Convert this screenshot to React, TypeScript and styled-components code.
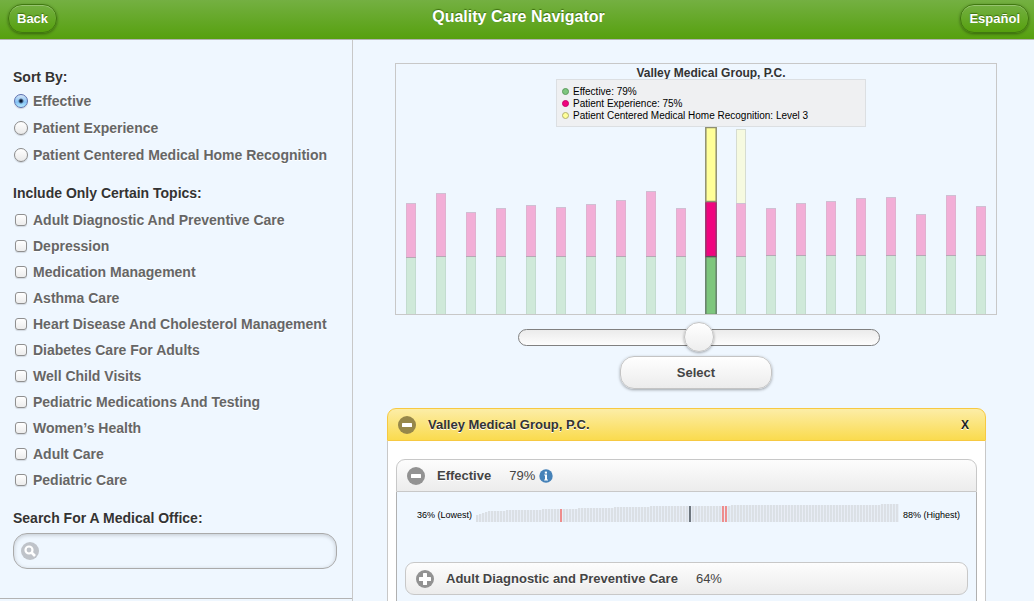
import React, { useState } from "react";
import styled, { createGlobalStyle, css } from "styled-components";

const GlobalStyle = createGlobalStyle`
  *, *::before, *::after { box-sizing: border-box; }
  html, body { margin: 0; background: #eff7ff; }
  body, button, input { font-family: "Liberation Sans", Arial, Helvetica, sans-serif; }
`;

const Shell = styled.div`
  display: flex;
  flex-direction: column;
  height: 100vh;
  overflow: hidden;
  color: #333;
`;

const TopBar = styled.header`
  display: grid;
  grid-template-columns: 1fr auto 1fr;
  align-items: start;
  flex: none;
  height: 40px;
  padding: 4px 5px 0 8px;
  border-bottom: 1px solid #b3b3b3;
  background: linear-gradient(#74b042, #56a00e);
`;

const AppTitle = styled.h1`
  margin: 0;
  color: #fff;
  font-size: 16px;
  line-height: 25px;
  text-shadow: 0 -1px 1px #3d6f0f;
`;

const BarButton = styled.button<{ $end?: boolean }>`
  justify-self: ${(p) => (p.$end ? "end" : "start")};
  height: 29px;
  padding: 0 8px;
  border: 1px solid #40780f;
  border-radius: 14px;
  background: linear-gradient(#74b042, #56a00e);
  box-shadow: 0 1px 3px rgba(0, 0, 0, 0.4), inset 0 1px 0 rgba(255, 255, 255, 0.25);
  color: #fff;
  font-size: 13px;
  font-weight: bold;
  text-shadow: 0 -1px 1px #3d6f0f;
`;

const Columns = styled.div`
  display: flex;
  flex: 1;
  min-height: 0;
`;

const Sidebar = styled.aside`
  flex: none;
  width: 353px;
  overflow-y: auto;
  scrollbar-width: none;
  border-right: 1px solid #c8c8c8;
`;

const Filters = styled.form`
  display: flex;
  flex-direction: column;
  gap: 16px;
  padding: 28px 15px 29px 13px;
  border-bottom: 1px solid #b3b3b3;
`;

const Group = styled.fieldset`
  margin: 0;
  padding: 0;
  border: 0;
`;

const headingText = css`
  display: block;
  padding: 0;
  color: #333;
  font-size: 14px;
  font-weight: bold;
  line-height: 19px;
  text-shadow: 0 1px 0 #fff;
`;

const GroupTitle = styled.legend`
  ${headingText}
`;

const SearchTitle = styled.label`
  ${headingText}
`;

const Options = styled.div<{ $spaced?: boolean }>`
  padding-top: ${(p) => (p.$spaced ? 4 : 0)}px;
`;

const Option = styled.label<{ $height: number }>`
  display: flex;
  align-items: center;
  gap: 5px;
  height: ${(p) => p.$height}px;
  color: #666;
  font-size: 14px;
  font-weight: bold;
  text-shadow: 0 1px 0 #fff;
  white-space: nowrap;
`;

const Radio = styled.input.attrs({ type: "radio" })`
  appearance: none;
  width: 14px;
  height: 14px;
  margin: 0 0 0 1px;
  border: 1px solid #8b8b8b;
  border-radius: 50%;
  background: linear-gradient(#fff, #e9e9e9);
  box-shadow: 0 1px 1px rgba(0, 0, 0, 0.15);
  &:checked {
    border-color: #5b6fae;
    background: radial-gradient(circle, #0c1a33 0 1px, transparent 3px), linear-gradient(#d3e4f7, #84c2f5 60%, #b6ecff);
  }
`;

const Checkbox = styled.input.attrs({ type: "checkbox" })`
  appearance: none;
  width: 12px;
  height: 12px;
  margin: 0 1px 0 2px;
  border: 1px solid #909090;
  border-radius: 3px;
  background: linear-gradient(#fff, #ececec);
  box-shadow: 0 1px 1px rgba(0, 0, 0, 0.12);
  &:checked { background: #6fb6f2; }
`;

const SearchSection = styled.div`
  display: flex;
  flex-direction: column;
  gap: 5px;
`;

const SearchBox = styled.div`
  display: flex;
  align-items: center;
  gap: 8px;
  height: 36px;
  padding: 0 8px 0 7px;
  border: 1px solid #aaa;
  border-radius: 14px;
  box-shadow: inset 0 1px 4px rgba(0, 0, 0, 0.2);
`;

const SearchInput = styled.input`
  flex: 1;
  min-width: 0;
  border: 0;
  outline: 0;
  background: transparent;
  font-size: 14px;
`;

const Content = styled.main`
  flex: 1;
  min-width: 0;
  padding: 23px 48px 0 34px;
  overflow-y: auto;
  scrollbar-width: none;
`;

const Explorer = styled.section`
  display: flex;
  flex-direction: column;
  align-items: center;
  margin: 0 -11px 0 8px;
`;

const Chart = styled.figure`
  align-self: stretch;
  margin: 0;
  border: 1px solid #c8c8c8;
`;

const ChartHead = styled.figcaption`
  display: flex;
  flex-direction: column;
  align-items: center;
  padding-left: 30px;
`;

const ChartTitle = styled.h2`
  height: 15px;
  margin: 0;
  padding-top: 2px;
  font-size: 12px;
  line-height: 15px;
`;

const Legend = styled.ul`
  width: 310px;
  height: 48px;
  margin: 0;
  padding: 5px;
  border: 1px solid #dcdfe2;
  background: #eff0f2;
  list-style: none;
`;

const LegendItem = styled.li`
  display: flex;
  align-items: center;
  gap: 4px;
  height: 12px;
  color: #000;
  font-size: 10px;
  white-space: nowrap;
`;

const Dot = styled.span<{ $color: string; $edge: string }>`
  width: 7px;
  height: 7px;
  border: 1px solid ${(p) => p.$edge};
  border-radius: 50%;
  background: ${(p) => p.$color};
`;

const Plot = styled.svg`
  display: block;
  width: 100%;
  height: 187px;
`;

const SliderRow = styled.div`
  display: flex;
  justify-content: center;
  align-self: stretch;
  padding: 7px 0 0 6px;
`;

const Slider = styled.input.attrs({ type: "range" })`
  appearance: none;
  width: 362px;
  height: 31px;
  margin: 0;
  background: transparent;
  &::-webkit-slider-runnable-track {
    height: 17px;
    border: 1px solid #808080;
    border-radius: 9px;
    background: linear-gradient(#ebebeb, #fdfdfd);
  }
  &::-webkit-slider-thumb {
    appearance: none;
    width: 30px;
    height: 30px;
    margin-top: -8px;
    border: 1px solid #c4c4c4;
    border-radius: 50%;
    background: linear-gradient(#fff, #eee);
    box-shadow: 0 1px 3px rgba(0, 0, 0, 0.35);
  }
`;

const SelectButton = styled.button`
  width: 152px;
  height: 33px;
  margin-top: 3px;
  border: 1px solid #c4c4c4;
  border-radius: 14px;
  background: linear-gradient(#fff, #ececec);
  box-shadow: 0 1px 3px rgba(0, 0, 0, 0.35);
  color: #444;
  font-size: 13px;
  font-weight: bold;
`;

const Panel = styled.section`
  margin-top: 19px;
`;

const PanelHead = styled.header`
  display: flex;
  align-items: center;
  gap: 12px;
  height: 33px;
  padding: 0 16px 0 10px;
  border: 1px solid #f7c942;
  border-radius: 9px 9px 0 0;
  background: linear-gradient(#fceda7, #fadb4e);
`;

const PanelTitle = styled.h2`
  flex: 1;
  margin: 0;
  font-size: 13px;
  text-shadow: 0 1px 0 #fff;
`;

const PlainButton = styled.button`
  display: flex;
  padding: 0;
  border: 0;
  background: none;
  color: #222;
  font-size: 12px;
  font-weight: bold;
  text-shadow: 0 1px 0 #fff;
`;

const PanelBody = styled.div`
  padding: 18px 8px;
  border: 1px solid #c8c8c8;
  border-top: 0;
  background: #fff;
`;

const MeasureHead = styled.header<{ $closed?: boolean }>`
  display: flex;
  align-items: center;
  gap: 12px;
  height: 33px;
  padding: 0 10px;
  border: 1px solid #c8c8c8;
  border-radius: ${(p) => (p.$closed ? "9px" : "9px 9px 0 0")};
  background: linear-gradient(#fdfdfd, #ececec);
  color: #444;
  font-size: 13px;
`;

const MeasureTitle = styled.h3`
  margin: 0;
  font-size: 13px;
  text-shadow: 0 1px 0 #fff;
`;

const Score = styled.span`
  display: flex;
  align-items: center;
  gap: 4px;
  margin-left: 6px;
`;

const MeasureBody = styled.div`
  padding: 12px 8px 24px;
  border: 1px solid #b0b0b0;
  border-top: 0;
  background: #eff7ff;
`;

const Distribution = styled.div`
  display: flex;
  align-items: center;
  gap: 4px;
  height: 21px;
  margin: 0 8px 37px 12px;
  color: #000;
  font-size: 9px;
  white-space: nowrap;
`;

const Strip = styled.svg`
  flex: 1;
  align-self: flex-start;
  min-width: 0;
  height: 18px;
`;

const Glyph = ({ kind, color }: { kind: "plus" | "minus"; color: string }) => (
  <svg width="18" height="18" viewBox="0 0 18 18" aria-hidden="true">
    <circle cx="9" cy="9" r="9" fill={color} />
    <rect x="4" y="7" width="10" height="4" rx="0.5" fill="#fff" />
    {kind === "plus" && <rect x="7" y="4" width="4" height="10" rx="0.5" fill="#fff" />}
    {kind === "plus" && <rect x="3" y="7" width="12" height="4" rx="0.5" fill="#fff" />}
    {kind === "plus" && <rect x="7" y="3" width="4" height="12" rx="0.5" fill="#fff" />}
  </svg>
);

const SearchGlyph = () => (
  <svg width="18" height="18" viewBox="0 0 18 18" aria-hidden="true">
    <circle cx="9" cy="9" r="9" fill="#bfc3c9" />
    <circle cx="8" cy="8" r="3.5" fill="none" stroke="#fff" strokeWidth="2.2" />
    <path d="M10.5 10.5 L14 14" stroke="#fff" strokeWidth="2.6" />
  </svg>
);

const InfoGlyph = () => (
  <svg width="14" height="14" viewBox="0 0 14 14" aria-hidden="true">
    <circle cx="7" cy="7" r="6.7" fill="#4682b8" />
    <rect x="5.8" y="2.6" width="2.2" height="2" fill="#fff" />
    <path d="M5.2 5.6 H8 V10.6 H9 V11.4 H5.2 V10.6 H6 V6.4 H5.2 Z" fill="#fff" />
  </svg>
);

const sorts = ["Effective", "Patient Experience", "Patient Centered Medical Home Recognition"];

const topics = [
  "Adult Diagnostic And Preventive Care",
  "Depression",
  "Medication Management",
  "Asthma Care",
  "Heart Disease And Cholesterol Management",
  "Diabetes Care For Adults",
  "Well Child Visits",
  "Pediatric Medications And Testing",
  "Women’s Health",
  "Adult Care",
  "Pediatric Care",
];

const legend = [
  { text: "Effective: 79%", color: "#7dc67d", edge: "#5c9a5c" },
  { text: "Patient Experience: 75%", color: "#f0047f", edge: "#c9036b" },
  { text: "Patient Centered Medical Home Recognition: Level 3", color: "#ffff99", edge: "#b0b070" },
];

type Office = { effective: number; experience: number; home?: number };

const experience = [54, 63, 44, 48, 51, 49, 52, 56, 65, 48, 55, 53, 47, 52, 54, 57, 58, 41, 60, 49];

const offices: Office[] = experience.map((value, i) => ({
  effective: i === 0 ? 57 : i > 11 ? 59 : 58,
  experience: value,
  home: i === 10 || i === 11 ? 74 : undefined,
}));

const selectedOffice = 10;

const OfficeBar = ({ office, index }: { office: Office; index: number }) => {
  const active = index === selectedOffice;
  const x = 10 + index * 30;
  const bottom = 187;
  const greenTop = bottom - office.effective;
  const pinkTop = greenTop - office.experience;
  const segment = (top: number, height: number, fill: string, edge: string) => (
    <rect
      x={active ? x - 0.2 : x + 0.5}
      y={top + 0.5}
      width={active ? 10.4 : 9}
      height={height}
      fill={fill}
      stroke={edge}
      strokeWidth={active ? 1.5 : 1}
    />
  );
  return (
    <g>
      {segment(greenTop, office.effective, active ? "#7dc67d" : "#cfe9d9", active ? "#66806a" : "#c3dccf")}
      {segment(pinkTop, office.experience, active ? "#f0047f" : "#f2aed7", active ? "#96386c" : "#dfb2cf")}
      {office.home !== undefined &&
        segment(pinkTop - office.home, office.home, active ? "#ffff99" : "#f6fae0", active ? "#8f8f70" : "#d6dcd0")}
      <path d={`M${x} ${greenTop + 0.5} h10`} stroke={active ? "#555" : "#b5a9b5"} />
      {!active && <path d={`M${x} ${pinkTop + 0.5} h10`} stroke="#cfc0d3" />}
    </g>
  );
};

const stripCount = 141;

const stripHeight = (i: number) => {
  if (i < 5) return 7 + i;
  if (i < 60) return 11 + Math.round((i - 4) / 12);
  return 16 + Math.round((i - 60) / 50);
};

const stripColor = (i: number) => {
  if (i === 71) return "#6b747c";
  if (i === 28 || i === 82 || i === 83) return "#ee8c8c";
  return "#dbe0e5";
};

export default function App() {
  const [sort, setSort] = useState(sorts[0]);
  return (
    <Shell>
      <GlobalStyle />
      <TopBar>
        <BarButton type="button">Back</BarButton>
        <AppTitle>Quality Care Navigator</AppTitle>
        <BarButton type="button" $end>Español</BarButton>
      </TopBar>
      <Columns>
        <Sidebar>
          <Filters>
            <Group>
              <GroupTitle>Sort By:</GroupTitle>
              <Options>
                {sorts.map((name) => (
                  <Option key={name} $height={27}>
                    <Radio name="sort" checked={sort === name} onChange={() => setSort(name)} />
                    {name}
                  </Option>
                ))}
              </Options>
            </Group>
            <Group>
              <GroupTitle>Include Only Certain Topics:</GroupTitle>
              <Options $spaced>
                {topics.map((name) => (
                  <Option key={name} $height={26}>
                    <Checkbox name="topic" value={name} />
                    {name}
                  </Option>
                ))}
              </Options>
            </Group>
            <SearchSection>
              <SearchTitle htmlFor="office">Search For A Medical Office:</SearchTitle>
              <SearchBox>
                <SearchGlyph />
                <SearchInput id="office" type="text" />
              </SearchBox>
            </SearchSection>
          </Filters>
        </Sidebar>
        <Content>
          <Explorer>
            <Chart>
              <ChartHead>
                <ChartTitle>Valley Medical Group, P.C.</ChartTitle>
                <Legend>
                  {legend.map((item) => (
                    <LegendItem key={item.text}>
                      <Dot $color={item.color} $edge={item.edge} />
                      {item.text}
                    </LegendItem>
                  ))}
                </Legend>
              </ChartHead>
              <Plot viewBox="0 0 600 187" preserveAspectRatio="none" aria-hidden="true">
                {offices.map((office, i) => (
                  <OfficeBar key={i} office={office} index={i} />
                ))}
              </Plot>
            </Chart>
            <SliderRow>
              <Slider aria-label="Medical office" min={0} max={20} defaultValue={10} />
            </SliderRow>
            <SelectButton type="button">Select</SelectButton>
          </Explorer>
          <Panel>
            <PanelHead>
              <PlainButton type="button" aria-label="Collapse office">
                <Glyph kind="minus" color="#96874a" />
              </PlainButton>
              <PanelTitle>Valley Medical Group, P.C.</PanelTitle>
              <PlainButton type="button">X</PlainButton>
            </PanelHead>
            <PanelBody>
              <MeasureHead>
                <PlainButton type="button" aria-label="Collapse measure">
                  <Glyph kind="minus" color="#929292" />
                </PlainButton>
                <MeasureTitle>Effective</MeasureTitle>
                <Score>
                  79%
                  <InfoGlyph />
                </Score>
              </MeasureHead>
              <MeasureBody>
                <Distribution>
                  <span>36% (Lowest)</span>
                  <Strip viewBox="0 0 423 18" preserveAspectRatio="none" aria-hidden="true">
                    {Array.from({ length: stripCount }, (_, i) => (
                      <g key={i}>
                        <rect x={i * 3} y={18 - stripHeight(i)} width="3" height={stripHeight(i)} fill="#e8eef7" />
                        <rect x={i * 3} y={18 - stripHeight(i)} width="2" height={stripHeight(i)} fill={stripColor(i)} />
                      </g>
                    ))}
                  </Strip>
                  <span>88% (Highest)</span>
                </Distribution>
                <MeasureHead $closed>
                  <PlainButton type="button" aria-label="Expand topic">
                    <Glyph kind="plus" color="#929292" />
                  </PlainButton>
                  <MeasureTitle>Adult Diagnostic and Preventive Care</MeasureTitle>
                  <Score>64%</Score>
                </MeasureHead>
              </MeasureBody>
            </PanelBody>
          </Panel>
        </Content>
      </Columns>
    </Shell>
  );
}
